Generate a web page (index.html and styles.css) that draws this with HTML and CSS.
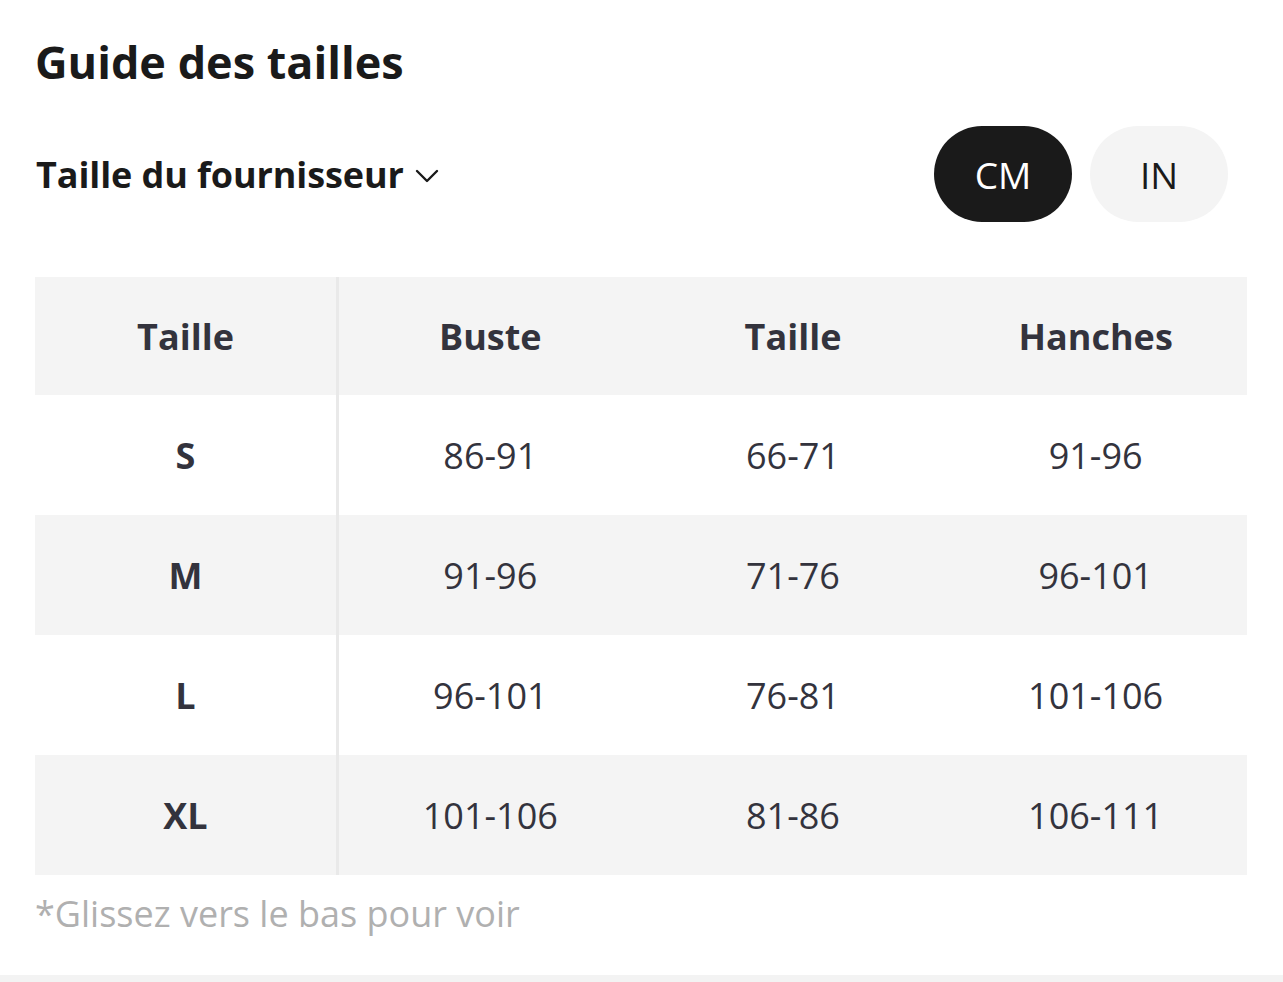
FILE: index.html
```html
<!DOCTYPE html>
<html lang="fr">
<head>
<meta charset="utf-8">
<title>Guide des tailles</title>
<link rel="stylesheet" href="styles.css">
</head>
<body>
<div class="page">
  <h1 class="title">Guide des tailles</h1>
  <div class="toolbar">
    <div class="supplier">
      <span>Taille du fournisseur</span>
      <svg class="chev" width="24" height="14" viewBox="0 0 24 14"><path d="M2 2 L12 12 L22 2" fill="none" stroke="#1a1a1a" stroke-width="2.4" stroke-linecap="round" stroke-linejoin="round"/></svg>
    </div>
    <div class="units">
      <button class="unit active">CM</button>
      <button class="unit">IN</button>
    </div>
  </div>
  <div class="table">
    <div class="row head">
      <div class="cell first">Taille</div>
      <div class="cell">Buste</div>
      <div class="cell">Taille</div>
      <div class="cell">Hanches</div>
    </div>
    <div class="row">
      <div class="cell first">S</div>
      <div class="cell">86-91</div>
      <div class="cell">66-71</div>
      <div class="cell">91-96</div>
    </div>
    <div class="row alt">
      <div class="cell first">M</div>
      <div class="cell">91-96</div>
      <div class="cell">71-76</div>
      <div class="cell">96-101</div>
    </div>
    <div class="row">
      <div class="cell first">L</div>
      <div class="cell">96-101</div>
      <div class="cell">76-81</div>
      <div class="cell">101-106</div>
    </div>
    <div class="row alt">
      <div class="cell first">XL</div>
      <div class="cell">101-106</div>
      <div class="cell">81-86</div>
      <div class="cell">106-111</div>
    </div>
  </div>
  <p class="note">*Glissez vers le bas pour voir</p>
</div>
<div class="bottom-band"></div>
</body>
</html>
```

FILE: styles.css
```css
html, body {
  margin: 0;
  padding: 0;
  background: #ffffff;
}
body {
  font-family: "Open Sans", "Noto Sans", sans-serif;
  color: #1a1a1a;
  height: 982px;
  overflow: hidden;
  position: relative;
}
.page {
  padding: 31px 36px 0 35px;
}
.title {
  margin: 0;
  font-size: 45px;
  font-weight: 700;
  line-height: 62px;
  color: #1a1a1a;
  letter-spacing: 0;
}
.toolbar {
  display: flex;
  align-items: center;
  justify-content: space-between;
  margin-top: 33px;
  height: 96px;
  padding-right: 19px;
}
.supplier {
  display: flex;
  align-items: center;
  gap: 11px;
  font-size: 36px;
  font-weight: 700;
  color: #1a1a1a;
  padding-left: 1px;
  letter-spacing: -0.1px;
}
.chev {
  margin-top: 4px;
}
.units {
  display: flex;
  gap: 18px;
}
.unit {
  width: 138px;
  height: 96px;
  border: none;
  border-radius: 48px;
  background: #f4f4f4;
  color: #1a1a1a;
  font-family: "Open Sans", "Noto Sans", sans-serif;
  font-size: 37px;
  font-weight: 400;
  padding: 0;
}
.unit.active {
  background: #1a1a1a;
  color: #ffffff;
}
.table {
  margin-top: 55px;
  width: 1212px;
}
.row {
  display: grid;
  grid-template-columns: 304px 1fr 1fr 1fr;
  height: 120px;
  background: #ffffff;
}
.row.head {
  height: 118px;
  background: #f4f4f4;
}
.row.alt {
  background: #f4f4f4;
}
.cell {
  display: flex;
  align-items: center;
  justify-content: center;
  font-size: 36px;
  font-weight: 400;
  color: #33333d;
}
.cell.first {
  font-weight: 700;
  border-right: 3px solid #e9e9e9;
}
.head .cell {
  font-weight: 700;
  color: #33333d;
}
.note {
  margin: 16px 0 0 0;
  font-size: 36px;
  line-height: 46px;
  color: #b0b0b0;
}
.bottom-band {
  position: absolute;
  left: 0;
  right: 0;
  bottom: 0;
  height: 7px;
  background: #f3f3f3;
}
```
